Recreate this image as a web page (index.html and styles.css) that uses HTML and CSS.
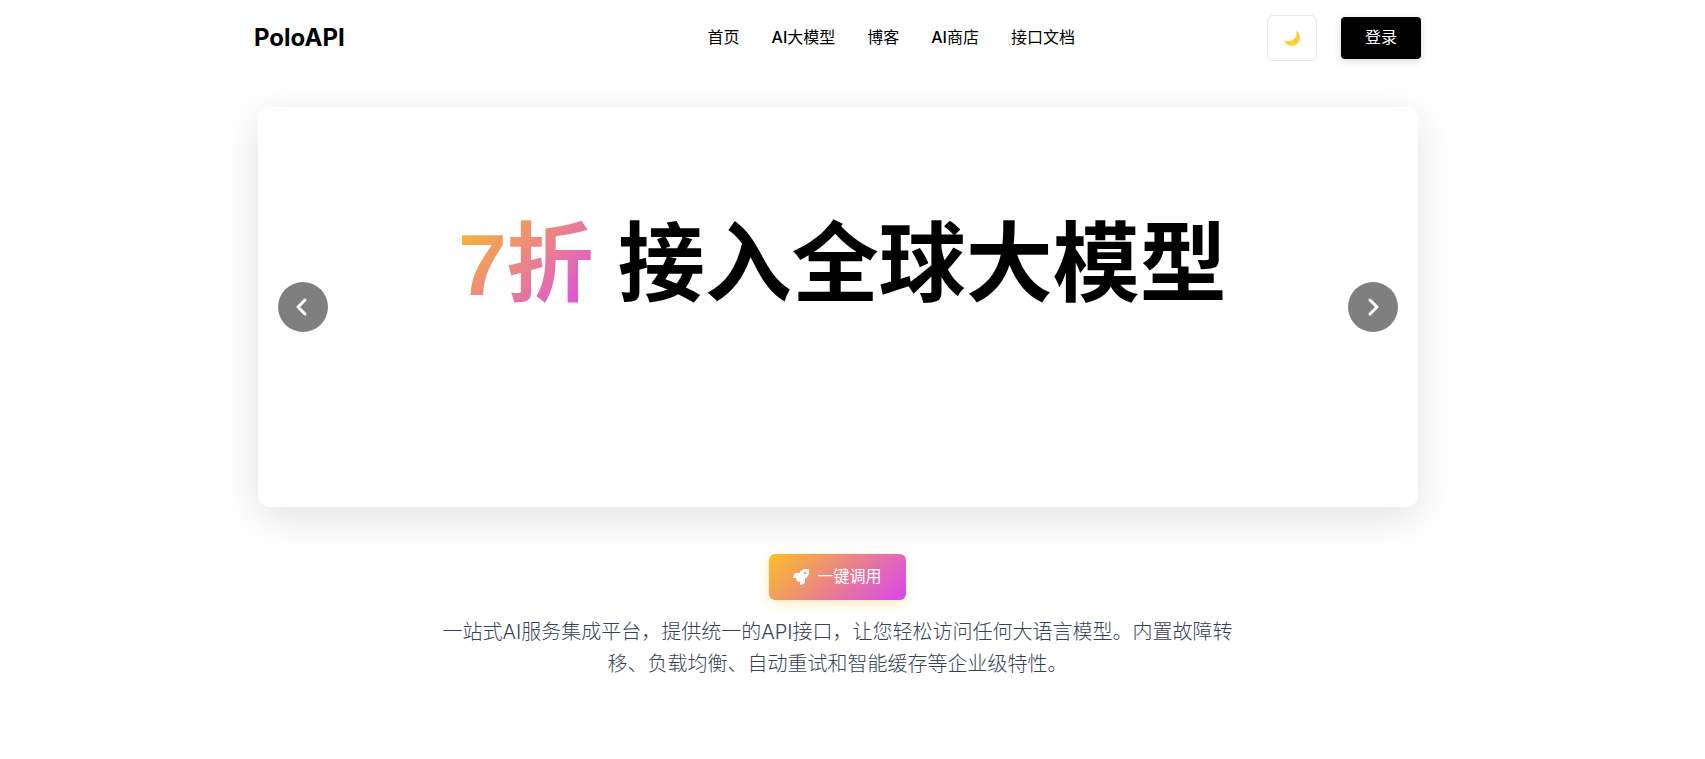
FILE: index.html
```html
<!DOCTYPE html>
<html lang="zh-CN">
<head>
	<meta charset="utf-8">
	<meta name="viewport" content="width=device-width, initial-scale=1">
	<title>PoloAPI</title>
	<link rel="stylesheet" href="styles.css">
</head>
<body>
	<header class="header">
		<a class="logo" href="#">PoloAPI</a>
		<nav class="nav">
			<a href="#">首页</a>
			<a href="#"><b>AI</b>大模型</a>
			<a href="#">博客</a>
			<a href="#"><b>AI</b>商店</a>
			<a href="#">接口文档</a>
		</nav>
		<div class="actions">
			<button class="theme-btn" type="button" aria-label="切换主题">
				<svg viewBox="0 0 16 16" width="16" height="16">
					<path d="M12.2 0C14.6 2.2 16.2 5 16 8.300C15.700 12.700 12.200 15.800 8 15.900C4.400 16 1.300 13.800 0 10.500C2.300 11.500 5.700 11.400 8.300 9.900C11.800 7.900 13.300 4.200 12.200 0Z" fill="#fdd23c"/>
					<circle cx="11.500" cy="10.400" r="1.600" fill="#f5bf31"/>
					<circle cx="14.100" cy="6.500" r="0.900" fill="#f5bf31"/>
					<circle cx="5.500" cy="13" r="0.900" fill="#f5bf31"/>
				</svg>
			</button>
			<button class="login-btn" type="button">登录</button>
		</div>
	</header>

	<main class="main">
		<section class="carousel">
			<button class="arrow" type="button" aria-label="上一张">
				<svg viewBox="0 0 20 20" width="20" height="20"><path d="M12 3L5 10L12 17"/></svg>
			</button>
			<h1 class="slide-title"><span class="highlight">7折</span> 接入全球大模型</h1>
			<button class="arrow" type="button" aria-label="下一张">
				<svg viewBox="0 0 20 20" width="20" height="20"><path d="M7 3L14 10L7 17"/></svg>
			</button>
		</section>

		<a class="cta" href="#">
			<svg viewBox="0 0 512 512" width="16" height="16"><path fill="#fff" d="M505.120 19.094c-1.190-5.531-6.658-11-12.207-12.188C460.716 0 435.507 0 410.407 0 307.175 0 245.269 55.203 199.052 128H94.838c-16.348.016-35.557 11.875-42.887 26.484L2.516 253.297A28.400 28.400 0 0 0 0 264a24 24 0 0 0 24 24h103.810l-22.474 22.469c-11.365 11.361-12.996 32.258 0 45.250l50.904 50.906c11.156 11.188 32.156 13.156 45.277 0l22.475-22.469V488a24 24 0 0 0 24 24 28.560 28.560 0 0 0 10.707-2.516l98.728-49.390c14.629-7.297 26.508-26.500 26.508-42.860V312.797c72.598-46.313 128.035-108.406 128.035-211.094.105-25.203.105-50.406-6.850-82.609zM384 168a40 40 0 1 1 40-40 40 40 0 0 1-40 40z"/></svg>
			<span>一键调用</span>
		</a>

		<p class="desc">一站式AI服务集成平台，提供统一的API接口，让您轻松访问任何大语言模型。内置故障转移、负载均衡、自动重试和智能缓存等企业级特性。</p>
	</main>
</body>
</html>
```
FILE: styles.css
```css
*{
	box-sizing: border-box;
}
body{
	margin: 0;
	padding-right: 30px;
	font-family: Inter, "Noto Sans CJK SC", sans-serif;
	font-size: 16px;
	color: #000;
	background-color: #fff;
}
a{
	color: inherit;
	text-decoration: none;
}
button{
	font-family: inherit;
	font-size: 16px;
	cursor: pointer;
}
.header{
	display: flex;
	align-items: center;
	max-width: 1167px;
	height: 76px;
	margin: 0 auto;
}
.logo{
	padding-bottom: 2px;
	font-size: 24px;
	font-weight: 700;
}
.nav{
	display: flex;
	gap: 32px;
	margin-left: auto;
	padding-bottom: 4px;
}
.nav b{
	font-weight: 500;
}
.actions{
	display: flex;
	align-items: center;
	gap: 24px;
	margin-left: 192px;
}
.theme-btn{
	display: flex;
	align-items: center;
	justify-content: center;
	width: 50px;
	height: 46px;
	border: 1px solid #e5e7eb;
	border-radius: 6px;
	background-color: #fff;
}
.login-btn{
	width: 80px;
	height: 42px;
	padding: 0 0 4px;
	border: none;
	border-radius: 4px;
	color: #fff;
	background-color: #000;
	box-shadow: 0 2px 8px rgba(0, 0, 0, 0.15);
}
.main{
	display: flex;
	flex-direction: column;
	align-items: center;
	padding-top: 31px;
}
.carousel{
	display: flex;
	align-items: center;
	justify-content: space-between;
	width: 100%;
	max-width: 1160px;
	height: 400px;
	padding: 0 20px;
	border-radius: 12px;
	background-color: #fff;
	box-shadow: 0 10px 40px rgba(0, 0, 0, 0.12);
}
.arrow{
	display: flex;
	align-items: center;
	justify-content: center;
	width: 50px;
	height: 50px;
	padding: 0;
	border: none;
	border-radius: 50%;
	background-color: rgba(0, 0, 0, 0.5);
}
.arrow path{
	fill: none;
	stroke: #fff;
	stroke-width: 3;
	stroke-linecap: round;
	stroke-linejoin: round;
}
.slide-title{
	margin: 0;
	padding: 0 0 84px 10px;
	font-family: "Liberation Sans", "Noto Sans CJK SC", sans-serif;
	font-size: 87px;
	font-weight: 700;
	line-height: 112px;
}
.highlight{
	color: transparent;
	background: linear-gradient(135deg, #fbbf24, #d946ef);
	-webkit-background-clip: text;
	background-clip: text;
}
.cta{
	display: flex;
	align-items: center;
	gap: 8px;
	height: 46px;
	margin-top: 47px;
	padding: 0 24px;
	border-radius: 6px;
	color: #fff;
	background: linear-gradient(135deg, #fbbf24, #d946ef);
	box-shadow: 0 4px 12px rgba(251, 191, 36, 0.3);
}
.cta span{
	padding-bottom: 4px;
}
.desc{
	max-width: 800px;
	margin: 16px 0 0;
	font-size: 20px;
	font-weight: 300;
	line-height: 32px;
	text-align: center;
	color: #374151;
}
```
